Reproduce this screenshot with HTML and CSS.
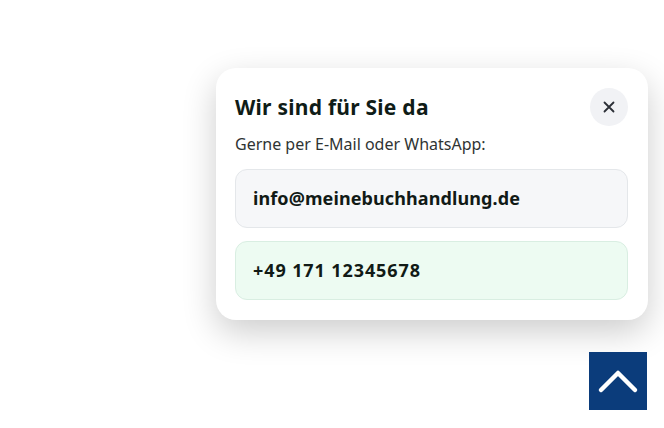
FILE: index.html
```html
<!DOCTYPE html>
<html lang="de">
<head>
    <meta charset="UTF-8">
    <meta name="viewport" content="width=device-width, initial-scale=1.0">
    <title>Kontakt</title>
    <link rel="stylesheet" href="styles.css">
</head>
<body>
<div class="page">
    <div class="contact-card">
        <div class="contact-header">
            <h2 class="contact-title">Wir sind für Sie da</h2>
            <button class="close-btn" aria-label="Schließen">
                <svg width="14" height="14" viewBox="0 0 14 14">
                    <path d="M2.5 2.5 L11.5 11.5 M11.5 2.5 L2.5 11.5" stroke="#2b2f36" stroke-width="1.8" stroke-linecap="round"/>
                </svg>
            </button>
        </div>
        <p class="contact-text">Gerne per E-Mail oder WhatsApp:</p>
        <a class="contact-item mail" href="#">info@meinebuchhandlung.de</a>
        <a class="contact-item whatsapp" href="#">+49 171 12345678</a>
    </div>

    <button class="to-top" aria-label="Nach oben">
        <svg width="58" height="58" viewBox="0 0 58 58">
            <path d="M12 38 L29 21 L46 38" fill="none" stroke="#fff" stroke-width="4.5" stroke-linecap="round" stroke-linejoin="round"/>
        </svg>
    </button>
</div>
</body>
</html>
```

FILE: styles.css
```css
body {
    margin: 0;
    background: #fff;
    font-family: "Noto Sans", Arial, sans-serif;
    color: #111a16;
}

.page {
    display: flex;
    flex-direction: column;
    align-items: flex-end;
    padding: 68px 16px 0 0;
}

.contact-card {
    width: 432px;
    box-sizing: border-box;
    padding: 20px 20px 20px 19px;
    background: #fff;
    border-radius: 20px;
    box-shadow: 0 12px 34px rgba(0, 0, 0, 0.2);
}

.contact-header {
    display: flex;
    align-items: center;
    justify-content: space-between;
}

.contact-title {
    margin: 0;
    font-size: 21px;
    letter-spacing: 0.25px;
    font-weight: 700;
    color: #0f1c17;
}

.close-btn {
    width: 38px;
    height: 38px;
    border: none;
    border-radius: 50%;
    background: #f1f2f5;
    display: flex;
    align-items: center;
    justify-content: center;
    padding: 0;
    cursor: pointer;
}

.contact-text {
    margin: 6px 0 13px;
    font-size: 16px;
    line-height: 24px;
    color: #2f3433;
}

.contact-item {
    display: block;
    padding: 15px 17px;
    border: 1px solid #e4e7ea;
    border-radius: 12px;
    font-size: 18px;
    line-height: 27px;
    font-weight: 700;
    letter-spacing: 0.1px;
    color: #111a16;
    text-decoration: none;
}

.mail {
    background: #f6f7f9;
}

.whatsapp {
    margin-top: 13px;
    background: #edfbf2;
    border-color: #d9eee2;
    letter-spacing: 0.9px;
}

.to-top {
    margin-top: 32px;
    margin-right: 1px;
    width: 58px;
    height: 58px;
    padding: 0;
    border: none;
    background: #0b3c7b;
    cursor: pointer;
    display: block;
}

.to-top svg {
    display: block;
}
```
